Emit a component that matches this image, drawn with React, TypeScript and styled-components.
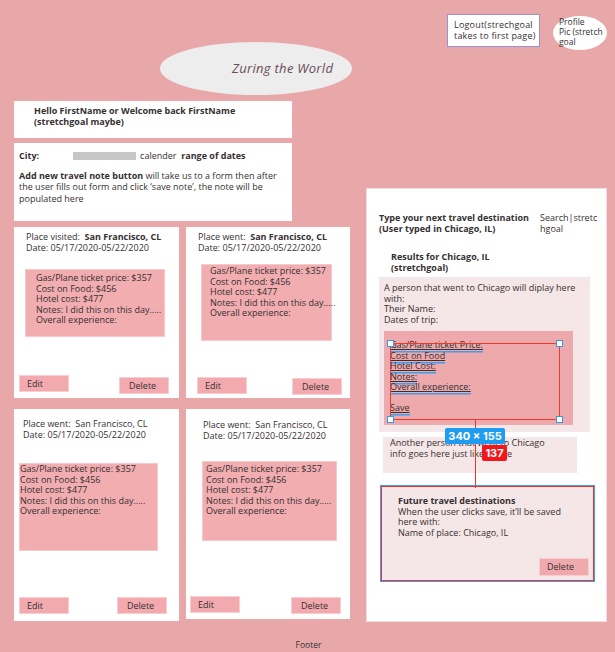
import styled, { createGlobalStyle } from "styled-components";

const GlobalStyle = createGlobalStyle`
  html, body {
    margin: 0;
    padding: 0;
    background: #e8a8aa;
  }
  * { box-sizing: border-box; }
`;

const Page = styled.div`
  width: 615px;
  min-height: 652px;
  background: #e8a8aa;
  font-family: "Open Sans", "Liberation Sans", sans-serif;
  font-size: 9px;
  line-height: 10.5px;
  color: #353032;
`;

// Cabeçalho
const Header = styled.div`
  display: flex;
  align-items: flex-start;
  height: 95px;
`;

const TitleOval = styled.div`
  margin: 42px 0 0 160px;
  width: 192px;
  height: 53px;
  border-radius: 50%;
  background: #ededed;
  display: flex;
  align-items: center;
  padding: 0 0 1px 72px;
  font-style: italic;
  font-size: 13px;
  color: #6c4b57;
  letter-spacing: 0.3px;
  white-space: nowrap;
`;

const LogoutBox = styled.div`
  margin: 14px 0 0 95px;
  width: 93px;
  height: 33px;
  background: #fff;
  border: 1px solid #9b92d6;
  padding: 5px 0 0 6px;
  font-size: 9px;
  letter-spacing: 0.2px;
  white-space: nowrap;
`;

const ProfileBlob = styled.div`
  margin: 16px 0 0 13px;
  width: 54px;
  height: 34px;
  background: #fff;
  border-radius: 50%;
  padding: 1px 0 0 6px;
  font-size: 8.5px;
  line-height: 10px;
  white-space: nowrap;
`;

// Conteúdo principal
const Main = styled.div`
  display: grid;
  grid-template-columns: 336px 241px;
  column-gap: 16px;
  padding: 6px 0 0 14px;
  align-items: start;
`;

const LeftColumn = styled.div`
  display: flex;
  flex-direction: column;
  gap: 5px;
`;

const WhiteBox = styled.div<{ $h: number }>`
  width: 278px;
  height: ${(p) => p.$h}px;
  background: #fff;
`;

const Hello = styled(WhiteBox)`
  padding: 5px 0 0 20px;
  font-weight: 700;
`;

const CityBox = styled(WhiteBox)`
  padding: 8px 0 0 5px;
`;

const CityRow = styled.div`
  display: flex;
  align-items: center;
`;

const Bold = styled.b`
  font-weight: 700;
`;

const GreyBar = styled.span`
  display: inline-block;
  width: 63px;
  height: 8px;
  background: #c6c6c6;
  margin: 0 4px 0 34px;
`;

const Para = styled.p`
  margin: 8px 0 0;
  line-height: 11.5px;
  width: 262px;
`;

const CardGrid = styled.div`
  margin-top: 1px;
  display: grid;
  grid-template-columns: 165px 164px;
  column-gap: 7px;
  row-gap: 11px;
  align-items: start;
`;

const Card = styled.div<{ $h: number }>`
  height: ${(p) => p.$h}px;
  background: #fff;
  display: flex;
  flex-direction: column;
`;

const CardHead = styled.div<{ $pt: number; $pl: number }>`
  padding: ${(p) => p.$pt}px 0 0 ${(p) => p.$pl}px;
  white-space: nowrap;
`;

const NoteBox = styled.div<{ $mt: number; $ml: number; $w: number; $h: number; $pad: string }>`
  margin: ${(p) => p.$mt}px 0 0 ${(p) => p.$ml}px;
  width: ${(p) => p.$w}px;
  height: ${(p) => p.$h}px;
  padding: ${(p) => p.$pad};
  background: #f2adb0;
  border: 1px solid #f6c9cb;
  white-space: nowrap;
`;

const ButtonRow = styled.div<{ $pb: number }>`
  margin-top: auto;
  position: relative;
  height: ${(p) => p.$pb + 20}px;
`;

const PinkButton = styled.div<{ $x: number; $y: number }>`
  position: absolute;
  left: ${(p) => p.$x}px;
  top: ${(p) => p.$y}px;
  width: 50px;
  height: 17px;
  background: #f2aaae;
  border: 1px solid #f7cfd1;
  padding: 3px 0 0 7px;
`;

const DeleteButton = styled(PinkButton)`
  padding-left: 9px;
`;

// Painel da direita
const RightPanel = styled.div`
  margin-top: 87px;
  width: 241px;
  height: 434px;
  background: #fff;
  border: 1px solid #f3dcdd;
  position: relative;
  padding: 24px 0 0 12px;
`;

const SearchRow = styled.div`
  display: flex;
`;

const SearchTitle = styled.div`
  width: 161px;
  font-weight: 700;
  white-space: nowrap;
`;

const SearchHint = styled.div`
  white-space: nowrap;
`;

const ResultsTitle = styled.div`
  margin: 18px 0 0 12px;
  font-weight: 700;
`;

const ResultsBox = styled.div`
  margin-top: 4px;
  width: 211px;
  height: 155px;
  background: #f5e6e7;
  padding: 6px 0 0 5px;
`;

const FormBox = styled.div`
  margin-top: 6px;
  width: 189px;
  height: 94px;
  background: #eea9ac;
  padding: 9px 0 0 6px;
`;

const FormLine = styled.div`
  height: 10.5px;
`;

const FormLink = styled.span`
  text-decoration: underline;
  box-shadow: 0 1.5px 0 #3a9ff0;
`;

const AnotherBox = styled.div`
  margin: 5px 0 0 4px;
  width: 194px;
  height: 36px;
  background: #f5e6e7;
  padding: 1px 0 0 7px;
`;

const FutureBox = styled.div`
  margin: 13px 0 0 2px;
  width: 213px;
  height: 95px;
  background: #f5e6e7;
  border: 1.5px solid #e8382b;
  outline: 1px solid #3aa0f0;
  padding: 9px 0 0 16px;
  position: relative;
`;

const FutureDelete = styled.div`
  position: absolute;
  right: 4px;
  bottom: 4px;
  width: 50px;
  height: 18px;
  background: #f0a9ad;
  border: 1px solid #f7cfd1;
  padding: 3px 0 0 7px;
`;

// Sobreposições do editor (seleção)
const SelectRect = styled.div`
  position: absolute;
  left: 23px;
  top: 154px;
  width: 170px;
  height: 77px;
  border: 1.5px solid #ec3a2c;
`;

const Handle = styled.div<{ $x: number; $y: number }>`
  position: absolute;
  left: ${(p) => p.$x}px;
  top: ${(p) => p.$y}px;
  width: 7px;
  height: 7px;
  background: #fff;
  border: 1px solid #2f9cf0;
`;

const Guide = styled.div`
  position: absolute;
  left: 108px;
  top: 231px;
  width: 1px;
  height: 68px;
  background: #e8382b;
`;

const Badge = styled.div<{ $x: number; $y: number; $w: number; $bg: string }>`
  position: absolute;
  left: ${(p) => p.$x}px;
  top: ${(p) => p.$y}px;
  width: ${(p) => p.$w}px;
  height: 16px;
  background: ${(p) => p.$bg};
  color: #fff;
  border-radius: 2px;
  font-family: "Inter", "Liberation Sans", sans-serif;
  font-weight: 700;
  font-size: 11px;
  line-height: 16px;
  text-align: center;
`;

const Footer = styled.div`
  text-align: center;
  padding: 18px 0 0 2px;
  font-size: 8.5px;
`;

const cards = [
  {
    h: 171, label: "Place visited:", bold: true, pt: 5, pl: 12,
    note: { mt: 16, ml: 11, w: 140, h: 68, pad: "3px 0 0 10px" },
    row: 23, edit: [5, 0], del: [105, 2],
  },
  {
    h: 171, label: "Place went:", bold: true, pt: 5, pl: 12,
    note: { mt: 11, ml: 15, w: 131, h: 77, pad: "1px 0 0 8px" },
    row: 21, edit: [11, 0], del: [106, 1],
  },
  {
    h: 212, label: "Place went:", bold: false, pt: 10, pl: 9,
    note: { mt: 23, ml: 5, w: 139, h: 88, pad: "0" },
    row: 24, edit: [5, 0], del: [103, 0],
  },
  {
    h: 210, label: "Place went:", bold: false, pt: 11, pl: 17,
    note: { mt: 20, ml: 16, w: 135, h: 80, pad: "2px 0 0 3px" },
    row: 23, edit: [4, 0], del: [105, 1],
  },
];

const noteLines = [
  "Gas/Plane ticket price: $357",
  "Cost on Food: $456",
  "Hotel cost: $477",
  "Notes: I did this on this day.....",
  "Overall experience:",
];

export default function App() {
  return (
    <Page>
      <GlobalStyle />
      <Header>
        <TitleOval>Zuring the World</TitleOval>
        <LogoutBox>
          Logout(strechgoal
          <br />
          takes to first page)
        </LogoutBox>
        <ProfileBlob>
          Profile
          <br />
          Pic (stretch
          <br />
          goal
        </ProfileBlob>
      </Header>

      <Main>
        <LeftColumn>
          <Hello $h={37}>
            Hello FirstName or Welcome back FirstName
            <br />
            (stretchgoal maybe)
          </Hello>
          <CityBox $h={78}>
            <CityRow>
              <Bold>City:</Bold>
              <GreyBar />
              calender&nbsp;&nbsp;<Bold>range of dates</Bold>
            </CityRow>
            <Para>
              <Bold>Add new travel note button</Bold> will take us to a form then after
              <br />
              the user fills out form and click ‘save note’, the note will be
              <br />
              populated here
            </Para>
          </CityBox>

          <CardGrid>
            {cards.map((c, i) => (
              <Card key={i} $h={c.h}>
                <CardHead $pt={c.pt} $pl={c.pl}>
                  {c.label}&nbsp;&nbsp;
                  {c.bold ? <Bold>San Francisco, CL</Bold> : "San Francisco, CL"}
                  <br />
                  Date: 05/17/2020-05/22/2020
                </CardHead>
                <NoteBox
                  $mt={c.note.mt}
                  $ml={c.note.ml}
                  $w={c.note.w}
                  $h={c.note.h}
                  $pad={c.note.pad}
                >
                  {noteLines.map((l) => (
                    <div key={l}>{l}</div>
                  ))}
                </NoteBox>
                <ButtonRow $pb={c.row - 20}>
                  <PinkButton $x={c.edit[0]} $y={c.edit[1]}>Edit</PinkButton>
                  <DeleteButton $x={c.del[0]} $y={c.del[1]}>Delete</DeleteButton>
                </ButtonRow>
              </Card>
            ))}
          </CardGrid>
        </LeftColumn>

        <RightPanel>
          <SearchRow>
            <SearchTitle>
              Type your next travel destination
              <br />
              (User typed in Chicago, IL)
            </SearchTitle>
            <SearchHint>
              Search|stretc
              <br />
              hgoal
            </SearchHint>
          </SearchRow>
          <ResultsTitle>
            Results for Chicago, IL
            <br />
            (stretchgoal)
          </ResultsTitle>
          <ResultsBox>
            A person that went to Chicago will diplay here
            <br />
            with:
            <br />
            Their Name:
            <br />
            Dates of trip:
            <FormBox>
              <FormLine><FormLink>Gas/Plane ticket Price:</FormLink></FormLine>
              <FormLine><FormLink>Cost on Food</FormLink></FormLine>
              <FormLine><FormLink>Hotel Cost:</FormLink></FormLine>
              <FormLine><FormLink>Notes:</FormLink></FormLine>
              <FormLine><FormLink>Overall experience:</FormLink></FormLine>
              <FormLine />
              <FormLine><FormLink>Save</FormLink></FormLine>
            </FormBox>
          </ResultsBox>
          <AnotherBox>
            Another person that went to Chicago
            <br />
            info goes here just like above
          </AnotherBox>
          <FutureBox>
            <Bold>Future travel destinations</Bold>
            <br />
            When the user clicks save, it’ll be saved
            <br />
            here with:
            <br />
            Name of place: Chicago, IL
            <FutureDelete>Delete</FutureDelete>
          </FutureBox>

          <SelectRect />
          <Handle $x={20} $y={151} />
          <Handle $x={189} $y={151} />
          <Handle $x={20} $y={227} />
          <Handle $x={189} $y={227} />
          <Guide />
          <Badge $x={78} $y={239} $w={60} $bg="#1f9cf0">340 × 155</Badge>
          <Badge $x={115} $y={256} $w={25} $bg="#f2161d">137</Badge>
        </RightPanel>
      </Main>

      <Footer>Footer</Footer>
    </Page>
  );
}
